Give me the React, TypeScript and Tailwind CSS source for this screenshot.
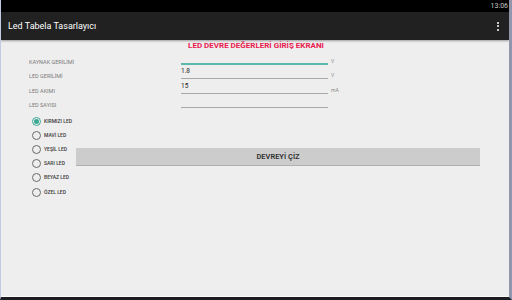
const fields = [
    { label: "KAYNAK GERİLİMİ", value: "", unit: "V", focused: true },
    { label: "LED GERİLİMİ", value: "1.8", unit: "V", focused: false },
    { label: "LED AKIMI", value: "15", unit: "mA", focused: false },
    { label: "LED SAYISI", value: "", unit: "", focused: false },
]

const leds = ["KIRMIZI LED", "MAVİ LED", "YEŞİL LED", "SARI LED", "BEYAZ LED", "ÖZEL LED"]

const Radio = ({ checked }: { checked: boolean }) => (
    <span
        className={`flex items-center justify-center w-[9px] h-[9px] rounded-full border ${checked ? "border-[#3aa893]" : "border-[#6a6a6a]"}`}
    >
        {checked && <span className="w-[5px] h-[5px] rounded-full bg-[#3aa893]" />}
    </span>
)

const App = () => {
    return (
        <div
            className="w-[512px] h-[300px] flex flex-col overflow-hidden bg-[#eeeeee] border-l border-l-[#c4cbe0] border-r-[3px] border-r-[#9096ae] border-b-[3px] border-b-[#1e1e22]"
            style={{ fontFamily: "Roboto, 'Liberation Sans', sans-serif" }}
        >
            {/* status bar */}
            <div className="h-[12px] bg-black flex items-center justify-end pr-[1px]">
                <span className="text-[7px] leading-[7px] text-[#c8c8c8]">13:06</span>
            </div>

            {/* action bar */}
            <div className="h-[28px] bg-[#212121] flex items-center justify-between pl-[7px] pr-[10px] shadow-[0_1px_2px_rgba(0,0,0,0.35)] z-10">
                <span className="text-[9px] leading-[12px] text-white">Led Tabela Tasarlayıcı</span>
                <div className="flex flex-col gap-[1.5px]">
                    <span className="w-[2px] h-[2px] bg-white rounded-full" />
                    <span className="w-[2px] h-[2px] bg-white rounded-full" />
                    <span className="w-[2px] h-[2px] bg-white rounded-full" />
                </div>
            </div>

            <div className="flex-1 flex flex-col border-b border-b-[#fafafa]">
                <h1 className="pt-[2px] text-center text-[8px] leading-[8px] font-bold text-[#e8204f] pl-[2px]">
                    LED DEVRE DEĞERLERİ GİRİŞ EKRANI
                </h1>

                <div className="flex flex-col">
                    {fields.map((f) => (
                        <div key={f.label} className="h-[14.5px] flex items-end">
                            <span className="w-[180px] pl-[28px] text-[5.5px] leading-[5px] text-[#7a7a7a]">{f.label}</span>
                            <div
                                className={`w-[147px] ${f.focused ? "border-b-2 border-[#5cb8aa]" : "border-b border-[#a8a8a8]"}`}
                            >
                                <span className="block text-[6.5px] leading-[7px] pb-[3px] text-[#222]">{f.value}</span>
                            </div>
                            <span className="ml-[3px] mb-[1px] text-[5px] leading-[5px] text-[#8a8a8a]">{f.unit}</span>
                        </div>
                    ))}
                </div>

                <div className="flex mt-[6px]">
                    <div className="w-[75px] pl-[31px] flex flex-col">
                        {leds.map((led, i) => (
                            <div key={led} className="h-[14.2px] flex items-center gap-[3px]">
                                <Radio checked={i === 0} />
                                <span className="text-[5px] leading-[5px] font-medium text-[#3a3a3a] whitespace-nowrap">{led}</span>
                            </div>
                        ))}
                    </div>
                    <button className="self-start mt-[34px] w-[404px] h-[18px] bg-[#cccccc] border-b border-[#b0b0b0] flex items-center justify-center text-[7.5px] font-semibold text-[#303030]">
                        DEVREYİ ÇİZ
                    </button>
                </div>
            </div>
        </div>
    )
}

export default App
